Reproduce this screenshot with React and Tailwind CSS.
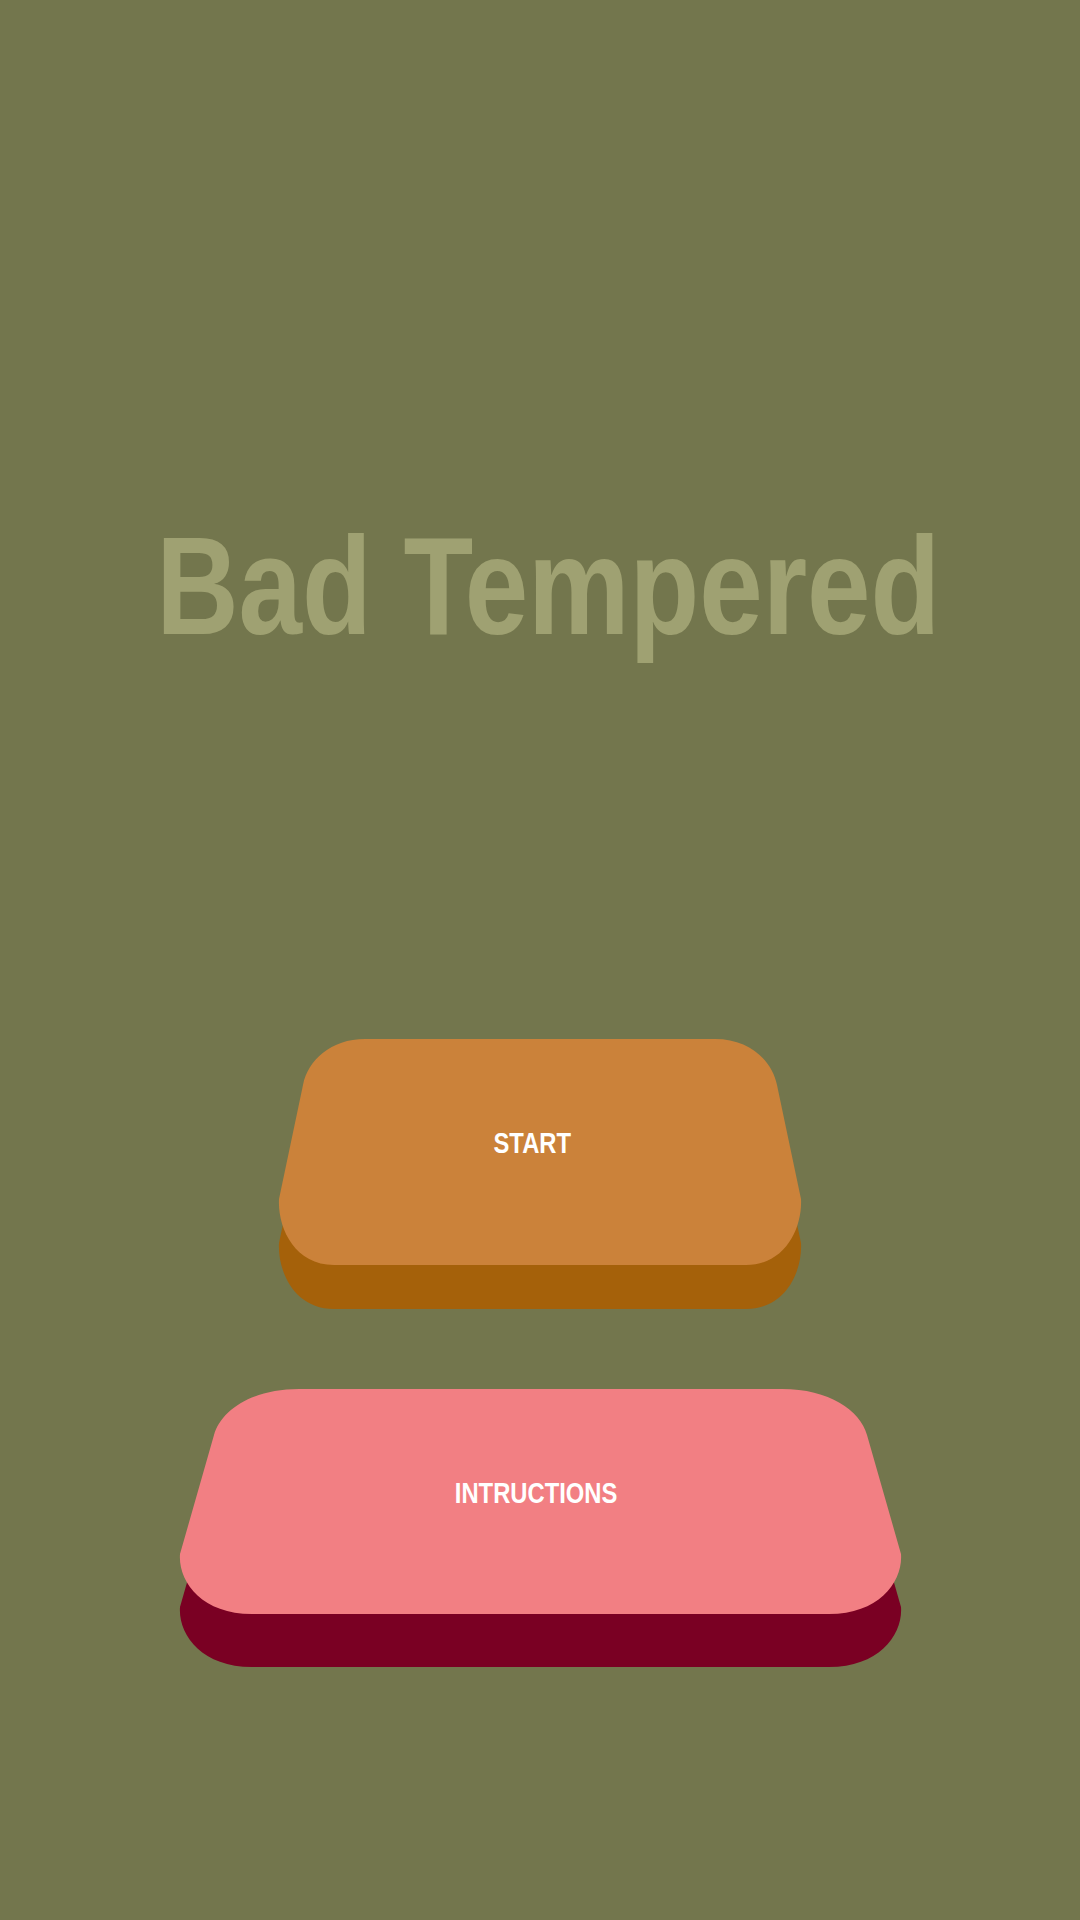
import React from "react";

const startPath =
  "M 87 0 L 437 0 C 471 0, 494 21, 499 46 L 523 160 C 524.5 188, 508 226, 468 226 L 56 226 C 16 226, -0.5 188, 1 160 L 25 46 C 30 21, 53 0, 87 0 Z";

const infoPath =
  "M 120 0 L 603 0 C 650 0, 681 21, 688 46 L 722 165 C 724 192, 701 225, 650 225 L 73 225 C 22 225, -1 192, 1 165 L 35 46 C 42 21, 73 0, 120 0 Z";

function BigButton({ label, path, width, depth, face, side, shift, onClick }) {
  return (
    <button
      type="button"
      onClick={onClick}
      className="relative block cursor-pointer"
      style={{ width, height: 226 + depth }}
    >
      <svg
        className="absolute inset-0"
        width={width}
        height={226 + depth}
        viewBox={`0 0 ${width} ${226 + depth}`}
      >
        <path d={path} fill={side} transform={`translate(0 ${depth})`} />
        <path d={path} fill={face} />
      </svg>
      <span
        className="absolute inset-x-0 top-[90px] flex justify-center"
        style={{ paddingRight: shift }}
      >
        <span className="inline-block scale-x-[0.82] text-[29px] leading-none font-bold text-white font-['Liberation_Sans','Arial',sans-serif]">
          {label}
        </span>
      </span>
    </button>
  );
}

export default function App() {
  return (
    <div className="min-h-[1920px] w-full bg-[#73764d] flex flex-col items-center">
      <h1 className="mt-[516px] pl-[20px] scale-x-[0.815] text-[140px] leading-none font-bold text-[#9fa172] font-['Liberation_Sans','Arial',sans-serif]">
        Bad Tempered
      </h1>
      <div className="mt-[383px] flex flex-col items-center gap-[80px]">
        <BigButton
          label="START"
          path={startPath}
          width={524}
          depth={44}
          face="#cb823a"
          side="#a5610a"
          shift={15}
        />
        <BigButton
          label="INTRUCTIONS"
          path={infoPath}
          width={723}
          depth={53}
          face="#f27f83"
          side="#7a0023"
          shift={8}
        />
      </div>
    </div>
  );
}
